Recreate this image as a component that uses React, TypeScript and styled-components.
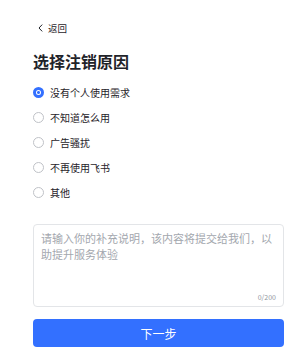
import React, { useState } from "react";
import styled, { createGlobalStyle } from "styled-components";

const Global = createGlobalStyle`
  html, body { margin: 0; padding: 0; background: #fff; }
  body { font-family: "Noto Sans CJK SC", "Noto Sans", sans-serif; color: #1f2329; }
  * { box-sizing: border-box; }
`;

const Page = styled.div`
  width: 300px;
  height: 359px;
  padding: 20px 16px 0 33px;
  display: flex;
  flex-direction: column;
  background: #fff;
`;

const BackRow = styled.div`
  display: flex;
  align-items: center;
  gap: 5px;
  height: 16px;
  padding-left: 5px;
  font-size: 9.5px;
  color: #1f2329;
`;

const Title = styled.h1`
  margin: 13px 0 0;
  font-size: 16px;
  line-height: 24px;
  font-weight: 600;
  color: #1f2329;
`;

const List = styled.div`
  margin-top: 7px;
  display: flex;
  flex-direction: column;
`;

const Row = styled.label`
  display: flex;
  align-items: center;
  height: 25px;
  gap: 6px;
  font-size: 10px;
  color: #1f2329;
  cursor: pointer;
`;

const Radio = styled.span<{ $checked: boolean }>`
  width: 11px;
  height: 11px;
  border-radius: 50%;
  flex-shrink: 0;
  border: ${(p) => (p.$checked ? "3px solid #3370ff" : "1px solid #bfc2c7")};
  background: ${(p) =>
    p.$checked ? "radial-gradient(circle, #3370ff 0 1.2px, #fff 1.7px)" : "#fff"};
`;

const Box = styled.div`
  margin-top: 19px;
  height: 83px;
  border: 1px solid #e3e5e8;
  border-radius: 4px;
  padding: 5px 4px 4px 7px;
  display: flex;
  flex-direction: column;
`;

const Area = styled.textarea`
  flex: 1;
  border: none;
  outline: none;
  resize: none;
  padding: 0;
  font-family: inherit;
  font-size: 11px;
  line-height: 16px;
  color: #1f2329;
  &::placeholder { color: #a3a7ae; }
`;

const Counter = styled.div`
  align-self: flex-end;
  margin-right: 3px;
  font-size: 7px;
  color: #8f959e;
  line-height: 10px;
`;

const Button = styled.button`
  margin-top: 12px;
  height: 28px;
  border: none;
  border-radius: 4px;
  background: #3370ff;
  color: #fff;
  font-family: inherit;
  font-size: 12px;
  cursor: pointer;
`;

const reasons = ["没有个人使用需求", "不知道怎么用", "广告骚扰", "不再使用飞书", "其他"];

export default function App() {
  const [sel, setSel] = useState(0);
  return (
    <>
      <Global />
      <Page>
        <BackRow>
          <svg width="5" height="8" viewBox="0 0 5 8">
            <path d="M4.2 0.6 L1 4 L4.2 7.4" fill="none" stroke="#1f2329" strokeWidth="1" />
          </svg>
          <span>返回</span>
        </BackRow>
        <Title>选择注销原因</Title>
        <List>
          {reasons.map((r, i) => (
            <Row key={r} onClick={() => setSel(i)}>
              <Radio $checked={sel === i} />
              {r}
            </Row>
          ))}
        </List>
        <Box>
          <Area placeholder="请输入你的补充说明，该内容将提交给我们，以助提升服务体验" />
          <Counter>0/200</Counter>
        </Box>
        <Button>下一步</Button>
      </Page>
    </>
  );
}
